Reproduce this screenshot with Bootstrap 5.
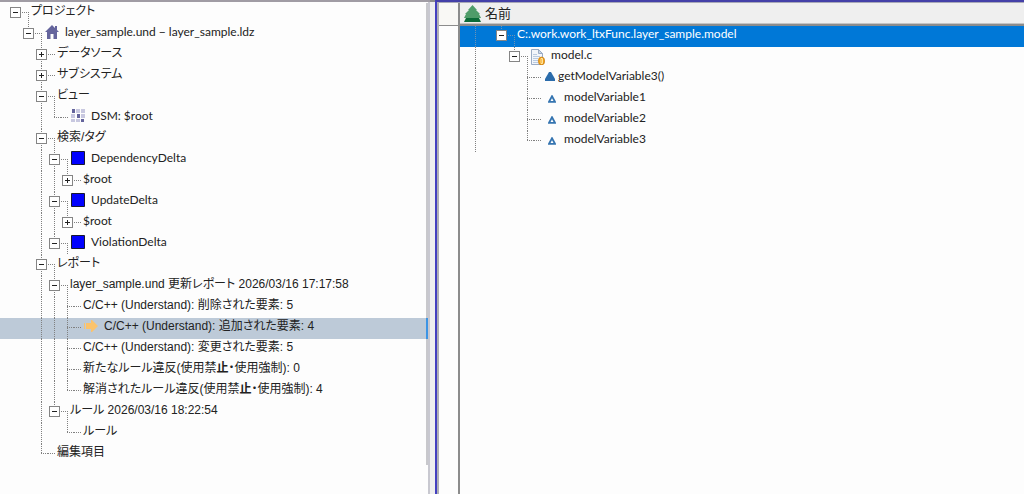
<!DOCTYPE html>
<html lang="ja">
<head>
<meta charset="utf-8">
<meta name="viewport" content="width=device-width, initial-scale=1">
<title>layer_sample.ldz</title>
<link href="https://cdn.jsdelivr.net/npm/bootstrap@5.3.0/dist/css/bootstrap.min.css" rel="stylesheet">
<style>
  body { font: 12px/16px "Liberation Sans", "Noto Sans CJK JP", sans-serif; font-feature-settings: "palt"; color: #222; background: #fdfdfd; }
  .latin { font-family: Lato, "Noto Sans CJK JP", sans-serif; }

  /* panes */
  .pane-left { flex: 0 0 42%; border-top: 2px solid #a09ca4; }
  .left-body { padding-top: 1px; border-right: 2px solid #c8c8d0; }
  .splitter { width: 5px; background: #efefef; border-top: 2px solid #8c8c8c; }
  .pane-right { border-top: 2px solid #4440a8; border-left: 2px solid #4440c0; }
  .right-inner { border-top: 1px solid #a8a8b8; border-left: 2px solid #b0b0b4; }
  .gutter { width: 21px; border-right: 2px solid #8c8c8c; }
  .gutter-head { height: 23px; background: #f9f8f5; border-bottom: 1px solid #8c8c8c; }
  .col-head { height: 23px; background: #efefef; border-bottom: 2px solid #8c8c8c; box-shadow: inset 0 -1px #c4c4c4; font-size: 13px; }

  /* tree */
  .tree { list-style: none; margin: 0; padding: 0 0 0 9px; --dot: #808080; }
  .tree-left { border-right: 2px solid #c8c8cc; }
  .tree-row { display: flex; height: 21px; margin-left: -9px; padding-left: 9px; white-space: nowrap; }
  .cell, .stub { flex: none; height: 21px; background-repeat: no-repeat; }
  .cell { width: 13px; }
  .stub { width: 9px; }
  .cell, .stub { --v: repeating-linear-gradient(to bottom, var(--dot) 0 1px, transparent 1px 2px); --h: repeating-linear-gradient(to right, var(--dot) 0 1px, transparent 1px 2px); }
  .v    { background-image: var(--v); background-position: 6px 0; background-size: 1px 21px; }
  .up   { background-image: var(--v); background-position: 6px 0; background-size: 1px 9px; }
  .tee  { background-image: var(--v), var(--h); background-position: 6px 0, 6px 9px; background-size: 1px 21px, 7px 1px; }
  .end  { background-image: var(--v), var(--h); background-position: 6px 0, 6px 9px; background-size: 1px 9px, 7px 1px; }
  .h    { background-image: var(--h); background-position: 0 9px; background-size: 7px 1px; }
  .drop { background-image: var(--h), var(--v); background-position: 0 9px, 6px 9px; background-size: 7px 1px, 1px 12px; }
  .toggle { display: block; width: 11px; height: 11px; margin: 4px 1px 0; padding: 0; border: 1px solid #858585; border-radius: 0; background: linear-gradient(#222, #222) center / 5px 1px no-repeat #fff; }
  .toggle.plus { background: linear-gradient(#222, #222) center / 5px 1px no-repeat, linear-gradient(#222, #222) center / 1px 5px no-repeat #fff; }
  .ico { flex: none; width: 14px; height: 14px; margin: 1px 6px 0 1px; }
  .ico-file { height: 16px; margin-top: 2px; }
  .ico-sm { margin-right: 0; }
  .selected { background: #bdcad8; border-right: 2px solid #3c94e4; margin-right: -2px; }
  .current { background: #0078d7; color: #fff; --dot: #6f93b5; }
</style>
</head>
<body>
<svg class="d-none">
  <symbol id="home" viewBox="0 0 14 14"><path fill="#64649c" d="M7 0 0 7h2v7h3.500V9h3v5H12V7h2l-2-2V1h-2v2z"/></symbol>
  <symbol id="matrix" viewBox="0 0 14 14"><path fill="#c8c8e0" d="M5 0h4v4H5zM10 0h4v4h-4zM0 5h4v4H0zM10 5h4v4h-4zM0 10h4v3H0zM5 10h4v3H5z"/><path fill="#64649c" d="M1 0h3v4H1zM6 5h3v4H6zM10 10h3v3h-3z"/></symbol>
  <symbol id="tag" viewBox="0 0 14 14"><path fill="#00f" stroke="#181830" d="M.5 .5h13v13H.5z"/></symbol>
  <symbol id="arrow" viewBox="0 0 14 14"><path fill="#fbc36c" d="M0 4h1v6H0zM2 4h5V1h1l6 6-6 6H7v-3H2z"/></symbol>
  <symbol id="file" viewBox="0 0 14 16"><path fill="#f2f5fa" stroke="#9aabc4" d="M.5 .5h7l4 4v11H.5z"/><path fill="#c9d6e8" stroke="#9aabc4" d="M7.500 .5v4h4z"/><path stroke="#b9cae0" d="M2 5.500h4M2 7.500h7M2 9.500h5M2 11.500h5M2 13.500h5"/><ellipse cx="10.500" cy="12" rx="3.200" ry="4" fill="#f5a316" stroke="#b87010" stroke-width=".6"/><path fill="none" stroke="#fff1c0" stroke-width=".8" d="M11.500 9.500h-1.500v5h1.500z"/></symbol>
  <symbol id="func" viewBox="0 0 10 9"><path fill="#2b6cab" d="M4 0h2l4 7v2H0V7z"/></symbol>
  <symbol id="var" viewBox="0 0 8 8"><path fill="#fff" stroke="#3474b0" stroke-width="1.800" d="M4 1.200 7 6.800H1z"/></symbol>
</svg>

<div class="d-flex min-vh-100">
  <nav class="pane-left d-flex" aria-label="プロジェクト">
    <div class="left-body flex-grow-1">
      <ul class="tree tree-left">
        <li class="tree-row"><span class="cell"><button class="toggle" aria-label="閉じる"></button></span><i class="stub drop"></i><span>プロジェクト</span></li>
        <li class="tree-row"><i class="cell"></i><span class="cell up"><button class="toggle" aria-label="閉じる"></button></span><i class="stub drop"></i><svg class="ico"><use href="#home"/></svg><span class="latin">layer_sample.und − layer_sample.ldz</span></li>
        <li class="tree-row"><i class="cell"></i><i class="cell"></i><span class="cell v"><button class="toggle plus" aria-label="開く"></button></span><i class="stub h"></i><span>データソース</span></li>
        <li class="tree-row"><i class="cell"></i><i class="cell"></i><span class="cell v"><button class="toggle plus" aria-label="開く"></button></span><i class="stub h"></i><span>サブシステム</span></li>
        <li class="tree-row"><i class="cell"></i><i class="cell"></i><span class="cell v"><button class="toggle" aria-label="閉じる"></button></span><i class="stub drop"></i><span>ビュー</span></li>
        <li class="tree-row"><i class="cell"></i><i class="cell"></i><i class="cell v"></i><i class="cell end"></i><i class="stub h"></i><svg class="ico"><use href="#matrix"/></svg><span class="latin">DSM: $root</span></li>
        <li class="tree-row"><i class="cell"></i><i class="cell"></i><span class="cell v"><button class="toggle" aria-label="閉じる"></button></span><i class="stub drop"></i><span>検索/タグ</span></li>
        <li class="tree-row"><i class="cell"></i><i class="cell"></i><i class="cell v"></i><span class="cell v"><button class="toggle" aria-label="閉じる"></button></span><i class="stub drop"></i><svg class="ico"><use href="#tag"/></svg><span class="latin">DependencyDelta</span></li>
        <li class="tree-row"><i class="cell"></i><i class="cell"></i><i class="cell v"></i><i class="cell v"></i><span class="cell up"><button class="toggle plus" aria-label="開く"></button></span><i class="stub h"></i><span class="latin">$root</span></li>
        <li class="tree-row"><i class="cell"></i><i class="cell"></i><i class="cell v"></i><span class="cell v"><button class="toggle" aria-label="閉じる"></button></span><i class="stub drop"></i><svg class="ico"><use href="#tag"/></svg><span class="latin">UpdateDelta</span></li>
        <li class="tree-row"><i class="cell"></i><i class="cell"></i><i class="cell v"></i><i class="cell v"></i><span class="cell up"><button class="toggle plus" aria-label="開く"></button></span><i class="stub h"></i><span class="latin">$root</span></li>
        <li class="tree-row"><i class="cell"></i><i class="cell"></i><i class="cell v"></i><span class="cell up"><button class="toggle" aria-label="閉じる"></button></span><i class="stub drop"></i><svg class="ico"><use href="#tag"/></svg><span class="latin">ViolationDelta</span></li>
        <li class="tree-row"><i class="cell"></i><i class="cell"></i><span class="cell v"><button class="toggle" aria-label="閉じる"></button></span><i class="stub drop"></i><span>レポート</span></li>
        <li class="tree-row"><i class="cell"></i><i class="cell"></i><i class="cell v"></i><span class="cell v"><button class="toggle" aria-label="閉じる"></button></span><i class="stub drop"></i><span>layer_sample.und 更新レポート 2026/03/16 17:17:58</span></li>
        <li class="tree-row"><i class="cell"></i><i class="cell"></i><i class="cell v"></i><i class="cell v"></i><i class="cell tee"></i><i class="stub h"></i><span>C/C++ (Understand): 削除された要素: 5</span></li>
        <li class="tree-row selected" aria-current="true"><i class="cell"></i><i class="cell"></i><i class="cell v"></i><i class="cell v"></i><i class="cell tee"></i><i class="stub h"></i><svg class="ico"><use href="#arrow"/></svg><span>C/C++ (Understand): 追加された要素: 4</span></li>
        <li class="tree-row"><i class="cell"></i><i class="cell"></i><i class="cell v"></i><i class="cell v"></i><i class="cell tee"></i><i class="stub h"></i><span>C/C++ (Understand): 変更された要素: 5</span></li>
        <li class="tree-row"><i class="cell"></i><i class="cell"></i><i class="cell v"></i><i class="cell v"></i><i class="cell tee"></i><i class="stub h"></i><span>新たなルール違反(使用禁<b>止</b>・使用強制): 0</span></li>
        <li class="tree-row"><i class="cell"></i><i class="cell"></i><i class="cell v"></i><i class="cell v"></i><i class="cell end"></i><i class="stub h"></i><span>解消されたルール違反(使用禁<b>止</b>・使用強制): 4</span></li>
        <li class="tree-row"><i class="cell"></i><i class="cell"></i><i class="cell v"></i><span class="cell up"><button class="toggle" aria-label="閉じる"></button></span><i class="stub drop"></i><span>ルール 2026/03/16 18:22:54</span></li>
        <li class="tree-row"><i class="cell"></i><i class="cell"></i><i class="cell v"></i><i class="cell"></i><i class="cell end"></i><i class="stub h"></i><span>ルール</span></li>
        <li class="tree-row"><i class="cell"></i><i class="cell"></i><i class="cell end"></i><i class="stub h"></i><span>編集項目</span></li>
      </ul>
    </div>
  </nav>
  <div class="splitter flex-shrink-0"></div>
  <main class="pane-right flex-grow-1 d-flex">
    <div class="right-inner flex-grow-1 d-flex">
      <div class="gutter flex-shrink-0"><div class="gutter-head"></div></div>
      <div class="flex-grow-1">
        <div class="col-head d-flex align-items-center gap-1 px-1">
          <svg width="17" height="18" viewBox="0 0 17 18"><path fill="#0b6b38" d="M4 9h9l4 8H0z"/><path fill="#4f9c6a" d="M8.500 0 13 5h-1l4 4h-1l2 4H0l2-4H1l4-4H4z"/></svg>
          <span>名前</span>
        </div>
        <ul class="tree">
          <li class="tree-row current" aria-current="true"><i class="cell v"></i><i class="cell"></i><span class="cell up"><button class="toggle" aria-label="閉じる"></button></span><i class="stub drop"></i><span class="latin">C:.work.work_ltxFunc.layer_sample.model</span></li>
          <li class="tree-row"><i class="cell v"></i><i class="cell"></i><i class="cell"></i><span class="cell up"><button class="toggle" aria-label="閉じる"></button></span><i class="stub drop"></i><svg class="ico ico-file"><use href="#file"/></svg><span class="latin">model.c</span></li>
          <li class="tree-row"><i class="cell v"></i><i class="cell"></i><i class="cell"></i><i class="cell"></i><i class="cell tee"></i><i class="stub h"></i><svg class="ico ico-sm" viewBox="-1 -3 14 14"><use href="#func" width="10" height="9"/></svg><span class="latin">getModelVariable3()</span></li>
          <li class="tree-row"><i class="cell v"></i><i class="cell"></i><i class="cell"></i><i class="cell"></i><i class="cell tee"></i><i class="stub h"></i><svg class="ico" viewBox="-4 -5 14 14"><use href="#var" width="8" height="8"/></svg><span class="latin">modelVariable1</span></li>
          <li class="tree-row"><i class="cell v"></i><i class="cell"></i><i class="cell"></i><i class="cell"></i><i class="cell tee"></i><i class="stub h"></i><svg class="ico" viewBox="-4 -5 14 14"><use href="#var" width="8" height="8"/></svg><span class="latin">modelVariable2</span></li>
          <li class="tree-row"><i class="cell v"></i><i class="cell"></i><i class="cell"></i><i class="cell"></i><i class="cell end"></i><i class="stub h"></i><svg class="ico" viewBox="-4 -5 14 14"><use href="#var" width="8" height="8"/></svg><span class="latin">modelVariable3</span></li>
        </ul>
      </div>
    </div>
  </main>
</div>
<script src="https://cdn.jsdelivr.net/npm/bootstrap@5.3.0/dist/js/bootstrap.bundle.min.js"></script>
</body>
</html>
